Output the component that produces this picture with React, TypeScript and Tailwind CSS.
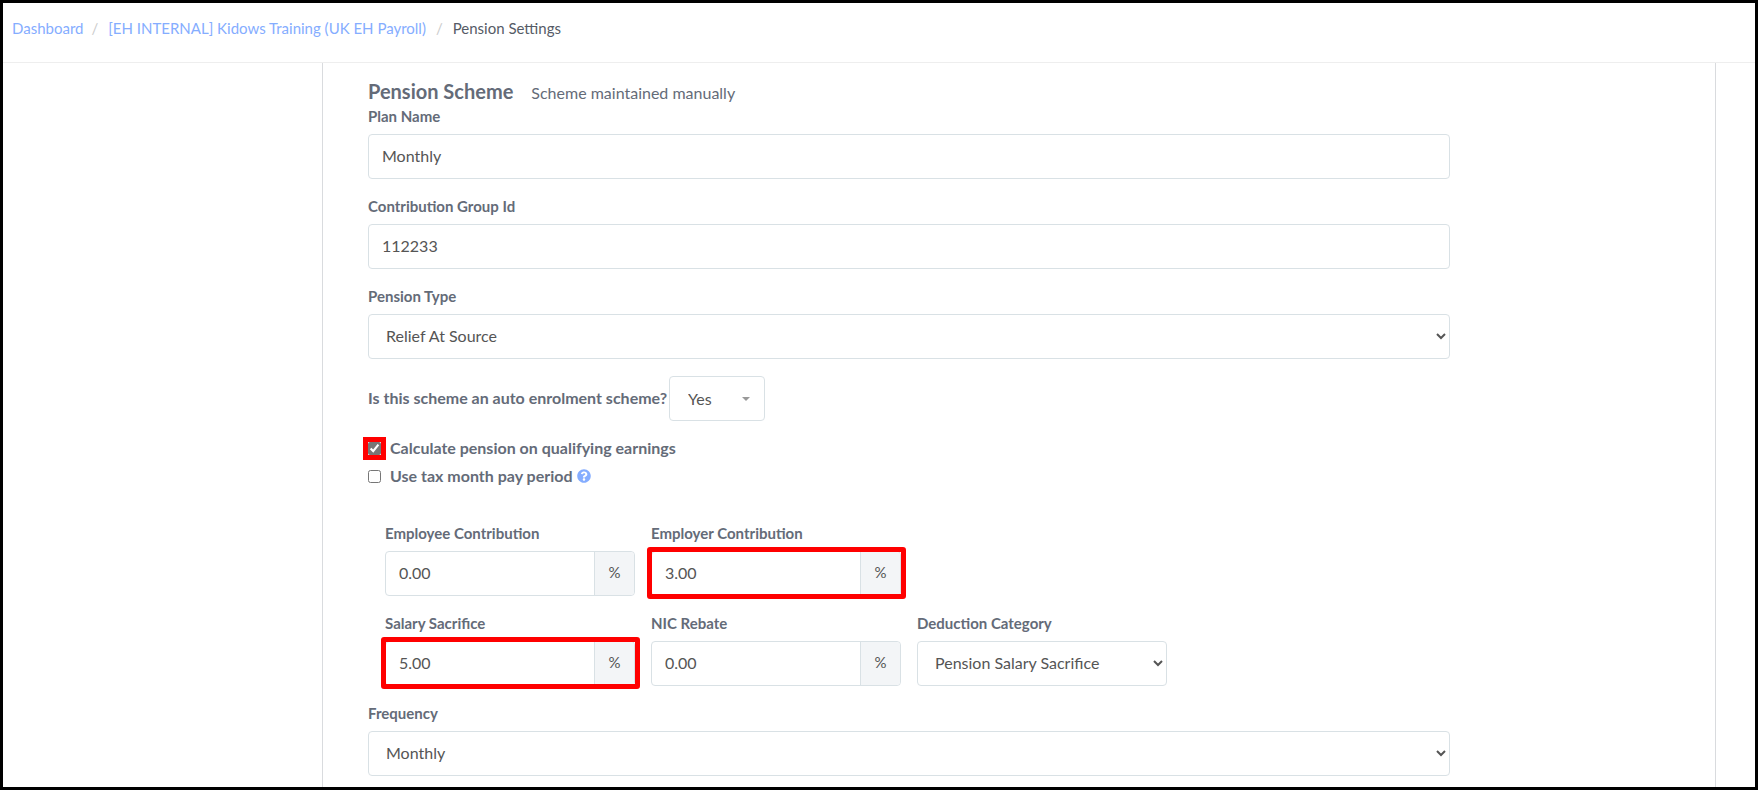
import { useState, type ReactNode } from "react";
import { FaQuestionCircle } from "react-icons/fa";

const CONTROL =
  "block h-[45px] w-full rounded-[4px] border border-[#d9e1e5] bg-white px-[13px] pb-0.5 text-base text-[#555]";

const CHECK_LABEL = "flex items-center gap-[9px] text-base leading-[22px] font-bold text-[#646b78]";

interface FieldProps {
  id: string;
  label: string;
  children: ReactNode;
}

function Field({ id, label, children }: FieldProps) {
  return (
    <div>
      <label htmlFor={id} className="block h-[29px] text-[15px] leading-[22px] font-bold text-[#646b78]">
        {label}
      </label>
      {children}
    </div>
  );
}

interface PercentFieldProps {
  id: string;
  label: string;
  initial: string;
  highlighted?: boolean;
}

function PercentField({ id, label, initial, highlighted }: PercentFieldProps) {
  const [value, setValue] = useState(initial);

  return (
    <Field id={id} label={label}>
      <div className="relative flex h-[45px] rounded-[4px] border border-[#d9e1e5]">
        <input
          id={id}
          type="text"
          value={value}
          onChange={(e) => setValue(e.target.value)}
          className="min-w-0 flex-1 rounded-l-[4px] px-[13px] pb-0.5 text-base text-[#555]"
        />
        <span className="flex w-10 items-center justify-center rounded-r-[4px] border-l border-[#d9e1e5] bg-[#f3f5f7] pb-0.5 text-[15px] text-[#555]">
          %
        </span>
        {highlighted && (
          <span className="pointer-events-none absolute -top-[5px] -right-[6px] -bottom-[4px] -left-[5px] rounded-[3px] border-5 border-[#ff0000]" />
        )}
      </div>
    </Field>
  );
}

function Breadcrumb() {
  return (
    <nav className="flex h-[60px] shrink-0 items-start border-b border-[#eee] px-[9px] pt-[13px] text-[15px] leading-6">
      <a href="#dashboard" className="text-[#85adff]">Dashboard</a>
      <span className="pr-[10px] pl-2 text-[#ccc]">/</span>
      <a href="#business" className="text-[#85adff]">[EH INTERNAL] Kidows Training (UK EH Payroll)</a>
      <span className="px-[10px] text-[#ccc]">/</span>
      <span className="text-[#555b66]">Pension Settings</span>
    </nav>
  );
}

export default function App() {
  const [planName, setPlanName] = useState("Monthly");
  const [groupId, setGroupId] = useState("112233");
  const [qualifying, setQualifying] = useState(true);
  const [taxMonth, setTaxMonth] = useState(false);

  return (
    <div className="flex h-screen flex-col overflow-hidden border-3 border-black bg-white font-['Lato',sans-serif]">
      <Breadcrumb />

      <div className="flex min-h-0 flex-1">
        <aside className="w-[319px] shrink-0" />

        <main className="mr-[39px] min-w-0 flex-1 border-x border-[#d9dbde] pt-4 pr-[265px] pl-[45px]">
          <div className="flex h-[26px] items-baseline gap-[18px]">
            <h1 className="text-xl leading-6 font-bold text-[#646b78]">Pension Scheme</h1>
            <span className="text-base leading-6 text-[#646b78]">Scheme maintained manually</span>
          </div>

          <form className="flex flex-col gap-4">
            <Field id="plan-name" label="Plan Name">
              <input
                id="plan-name"
                type="text"
                value={planName}
                onChange={(e) => setPlanName(e.target.value)}
                className={CONTROL}
              />
            </Field>

            <Field id="group-id" label="Contribution Group Id">
              <input
                id="group-id"
                type="text"
                value={groupId}
                onChange={(e) => setGroupId(e.target.value)}
                className={CONTROL}
              />
            </Field>

            <Field id="pension-type" label="Pension Type">
              <select id="pension-type" className={CONTROL}>
                <option>Relief At Source</option>
                <option>Net Pay Arrangement</option>
                <option>Salary Sacrifice</option>
              </select>
            </Field>

            <div className="flex h-[46px] items-end gap-0.5">
              <label htmlFor="auto-enrolment" className="text-base leading-[46px] font-bold text-[#646b78]">
                Is this scheme an auto enrolment scheme?
              </label>
              <div className="relative w-24">
                <select
                  id="auto-enrolment"
                  className="block h-[45px] w-full appearance-none rounded-[4px] border border-[#d9e1e5] bg-white px-[18px] text-base text-[#555]"
                >
                  <option>Yes</option>
                  <option>No</option>
                </select>
                <span className="pointer-events-none absolute top-[21px] right-[15px] border-x-4 border-t-4 border-x-transparent border-t-[#999]" />
              </div>
            </div>

            <div className="flex flex-col gap-1.5">
              <label className={CHECK_LABEL}>
                <input
                  type="checkbox"
                  checked={qualifying}
                  onChange={(e) => setQualifying(e.target.checked)}
                  className="size-[13px] accent-[#767676] outline-5 outline-[#ff0000]"
                />
                Calculate pension on qualifying earnings
              </label>
              <label className={CHECK_LABEL}>
                <input
                  type="checkbox"
                  checked={taxMonth}
                  onChange={(e) => setTaxMonth(e.target.checked)}
                  className="size-[13px]"
                />
                <span className="flex items-center gap-1">
                  Use tax month pay period
                  <FaQuestionCircle className="size-[14px] text-[#85adff]" />
                </span>
              </label>
            </div>

            <div className="mt-[19px] grid grid-cols-4 gap-4 px-[17px]">
              <PercentField id="employee" label="Employee Contribution" initial="0.00" />
              <PercentField id="employer" label="Employer Contribution" initial="3.00" highlighted />
              <div className="col-span-2" />
              <PercentField id="sacrifice" label="Salary Sacrifice" initial="5.00" highlighted />
              <PercentField id="nic-rebate" label="NIC Rebate" initial="0.00" />
              <Field id="category" label="Deduction Category">
                <select id="category" className={CONTROL}>
                  <option>Pension Salary Sacrifice</option>
                  <option>Pension</option>
                </select>
              </Field>
            </div>

            <Field id="frequency" label="Frequency">
              <select id="frequency" className={CONTROL}>
                <option>Monthly</option>
                <option>Weekly</option>
              </select>
            </Field>
          </form>
        </main>
      </div>
    </div>
  );
}
